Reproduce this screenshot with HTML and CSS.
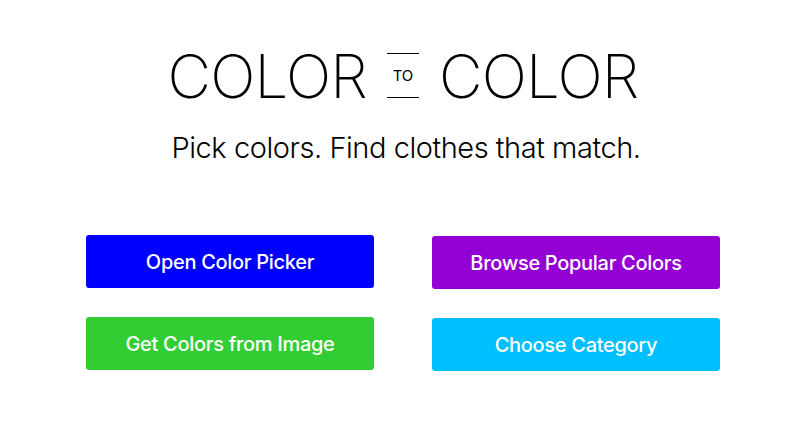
FILE: index.html
```html
<!DOCTYPE html>
<html lang="en">
<head>
  <meta charset="UTF-8" />
  <title>Color to Color</title>
  <link rel="stylesheet" href="styles.css">
</head>
<body>
  <div class="page">
    <header class="hero">
      <h1 class="logo">
        <span class="logo-word">COLOR</span>
        <span class="logo-to">TO</span>
        <span class="logo-word">COLOR</span>
      </h1>
      <p class="tagline">Pick colors. Find clothes that match.</p>
    </header>
    <div class="actions">
      <div class="col">
        <button class="btn btn-blue">Open Color Picker</button>
        <button class="btn btn-green">Get Colors from Image</button>
      </div>
      <div class="col col-right">
        <button class="btn btn-purple">Browse Popular Colors</button>
        <button class="btn btn-sky">Choose Category</button>
      </div>
    </div>
  </div>
</body>
</html>
```

FILE: styles.css
```css
html, body {
  margin: 0;
  background: #fff;
  font-family: 'Inter', 'Liberation Sans', Arial, sans-serif;
  color: #000;
}
.page {
  display: flex;
  flex-direction: column;
  align-items: center;
  padding: 40px 0 0 5px;
}
.hero {
  display: flex;
  flex-direction: column;
  align-items: center;
}
.logo {
  margin: 0;
  display: flex;
  align-items: center;
  gap: 20px;
  font-weight: 200;
  font-size: 60px;
  line-height: 72px;
  letter-spacing: -0.8px;
}
.logo-to {
  font-size: 15px;
  font-weight: 400;
  line-height: 15px;
  letter-spacing: 0;
  width: 32px;
  text-align: center;
  padding: 14px 0;
  margin-top: -2px;
  border-top: 1px solid #000;
  border-bottom: 1px solid #000;
}
.tagline {
  margin: 18px 0 0 6px;
  font-size: 29px;
  font-weight: 300;
  letter-spacing: -0.45px;
}
.actions {
  display: flex;
  gap: 58px;
  margin-top: 70px;
}
.col {
  display: flex;
  flex-direction: column;
  gap: 29px;
  width: 288px;
}
.col-right {
  margin-top: 1px;
}
.btn {
  height: 53px;
  border: none;
  border-radius: 3px;
  color: #fff;
  font-family: inherit;
  font-size: 20px;
  font-weight: 500;
  letter-spacing: -0.3px;
  cursor: pointer;
}
.btn-blue { background: #0000ff; }
.btn-green { background: #32cd32; }
.btn-purple { background: #9400d3; }
.btn-sky { background: #00bfff; }
```
